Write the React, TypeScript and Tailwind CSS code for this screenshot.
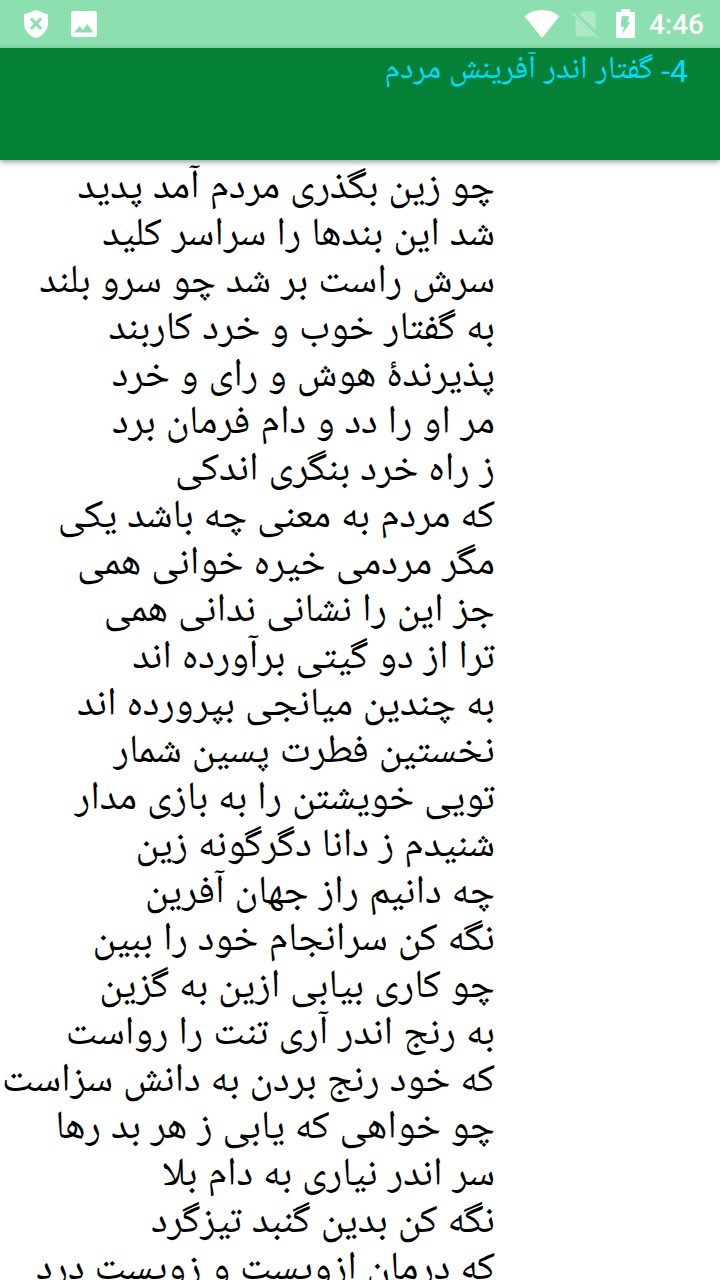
const verses = [
    "چو زین بگذری مردم آمد پدید",
    "شد این بندها را سراسر کلید",
    "سرش راست بر شد چو سرو بلند",
    "به گفتار خوب و خرد کاربند",
    "پذیرندهٔ هوش و رای و خرد",
    "مر او را دد و دام فرمان برد",
    "ز راه خرد بنگری اندکی",
    "که مردم به معنی چه باشد یکی",
    "مگر مردمی خیره خوانی همی",
    "جز این را نشانی ندانی همی",
    "ترا از دو گیتی برآورده اند",
    "به چندین میانجی بپرورده اند",
    "نخستین فطرت پسین شمار",
    "تویی خویشتن را به بازی مدار",
    "شنیدم ز دانا دگرگونه زین",
    "چه دانیم راز جهان آفرین",
    "نگه کن سرانجام خود را ببین",
    "چو کاری بیابی ازین به گزین",
    "به رنج اندر آری تنت را رواست",
    "که خود رنج بردن به دانش سزاست",
    "چو خواهی که یابی ز هر بد رها",
    "سر اندر نیاری به دام بلا",
    "نگه کن بدین گنبد تیزگرد",
    "که درمان ازویست و زویست درد",
];

function ShieldIcon() {
    return (
        <svg viewBox="0 0 24 28" className="h-7 w-6" aria-hidden="true">
            <path fill="#fff" d="M12 0 24 4.500V13c0 7-5 13.200-12 15C5 26.200 0 20 0 13V4.500Z" />
            <path stroke="#8cdfae" strokeWidth="3" d="m6.800 8.500 10.400 10.400m0-10.400L6.800 18.900" />
        </svg>
    );
}

function ImageIcon() {
    return (
        <svg viewBox="0 0 26 26" className="size-[26px]" aria-hidden="true">
            <rect width="26" height="26" rx="3" fill="#fff" />
            <path fill="#8cdfae" d="m3 21.500 5.500-6.500 3.500 4 4.500-6 6 8.500Z" />
        </svg>
    );
}

function WifiIcon() {
    return (
        <svg viewBox="0 0 36 28" className="h-7 w-9" aria-hidden="true">
            <path fill="#fff" d="M18 28 .5 6.300C5.500 2.200 11.500 0 18 0s12.500 2.200 17.500 6.300Z" />
        </svg>
    );
}

function NoSimIcon() {
    return (
        <svg viewBox="0 0 26 28" className="h-7 w-[26px]" aria-hidden="true">
            <g fill="#fff" fillOpacity=".3">
                <path d="M10.500 1.200H21a2.500 2.500 0 0 1 2.500 2.500V20L7 4.700Z" />
                <path d="M3.500 8 22 26.200a3 3 0 0 1-1 .3H6A2.500 2.500 0 0 1 3.500 24Z" />
                <path d="M1.700 2.600 26 26.700 24.500 28.200.2 4.100Z" />
            </g>
        </svg>
    );
}

function BatteryIcon() {
    return (
        <svg viewBox="0 0 19 29" className="h-[29px] w-[19px]" aria-hidden="true">
            <path fill="#fff" d="M5 0h9v3h5v26H0V3h5Z" />
            <path fill="#8cdfae" d="M5.700 7.300h7.600l-2 6h3L6 25.700l2-8H4.700Z" />
        </svg>
    );
}

function StatusBar() {
    return (
        <div className="flex h-12 shrink-0 items-center justify-between bg-[#8cdfae] pr-4 pl-6">
            <div className="flex items-center gap-[23px]">
                <ShieldIcon />
                <ImageIcon />
            </div>
            <div className="flex items-end pb-px">
                <WifiIcon />
                <div className="ml-3">
                    <NoSimIcon />
                </div>
                <div className="ml-[18px]">
                    <BatteryIcon />
                </div>
                <time className="ml-[14px] font-['Roboto',sans-serif] text-[28px] leading-[26px] font-medium text-white">4:46</time>
            </div>
        </div>
    );
}

export default function App() {
    return (
        <div className="flex h-screen flex-col overflow-hidden bg-white font-['Roboto','Noto_Naskh_Arabic_UI','DejaVu_Sans',sans-serif]">
            <StatusBar />
            <header dir="rtl" className="z-10 h-28 shrink-0 bg-[#048037] px-8 pt-1 shadow-[0_2px_6px_rgba(0,0,0,0.4)]">
                <h1 className="text-[32px] leading-[38px] text-[#00ddff]">4- گفتار اندر آفرینش مردم</h1>
            </header>
            <main dir="rtl" lang="fa" className="mr-auto w-fit pt-1.5 pl-0.5 text-[40px] leading-[47px] whitespace-nowrap text-black">
                {verses.map((verse) => (
                    <p key={verse}>{verse}</p>
                ))}
            </main>
        </div>
    );
}
